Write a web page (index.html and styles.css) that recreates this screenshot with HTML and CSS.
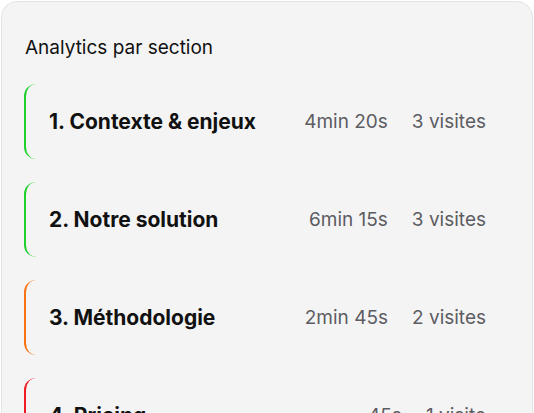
FILE: index.html
```html
<!DOCTYPE html>
<html lang="fr">
<head>
<meta charset="utf-8">
<link rel="stylesheet" href="styles.css">
</head>
<body>
<div class="card">
  <h2 class="title">Analytics par section</h2>
  <div class="list">
    <div class="row green">
      <span class="name">1. Contexte &amp; enjeux</span>
      <span class="stats"><span>4min 20s</span><span>3 visites</span></span>
    </div>
    <div class="row green">
      <span class="name">2. Notre solution</span>
      <span class="stats"><span>6min 15s</span><span>3 visites</span></span>
    </div>
    <div class="row orange">
      <span class="name">3. Méthodologie</span>
      <span class="stats"><span>2min 45s</span><span>2 visites</span></span>
    </div>
    <div class="row red">
      <span class="name">4. Pricing</span>
      <span class="stats"><span>45s</span><span>1 visite</span></span>
    </div>
  </div>
</div>
</body>
</html>
```
FILE: styles.css
```css
html, body {
  margin: 0;
  padding: 0;
  background: #ffffff;
  font-family: Inter, "Noto Sans", sans-serif;
}
body {
  padding: 1px 1px 0 1px;
  height: 413px;
  overflow: hidden;
  box-sizing: border-box;
}
.card {
  background: #f4f4f4;
  border: 1px solid #e4e4e4;
  border-radius: 16px;
  padding: 34px 22px 24px 22px;
  min-height: 500px;
}
.title {
  margin: 0 0 0 1px;
  font-size: 19px;
  font-weight: 400;
  line-height: 24px;
  color: #111;
}
.list {
  margin-top: 24px;
  display: flex;
  flex-direction: column;
  gap: 23px;
}
.row {
  height: 75px;
  box-sizing: border-box;
  border-left: 2px solid #22c932;
  border-radius: 12px;
  padding: 0 24px 0 23px;
  display: flex;
  align-items: center;
  justify-content: space-between;
}
.row.green { border-left-color: #1fd02f; }
.row.orange { border-left-color: #f97316; }
.row.red { border-left-color: #f01c22; }
.name {
  font-size: 21px;
  font-weight: 700;
  color: #111;
}
.stats {
  display: flex;
  gap: 24px;
  font-size: 19px;
  color: #5c5c62;
}
```
